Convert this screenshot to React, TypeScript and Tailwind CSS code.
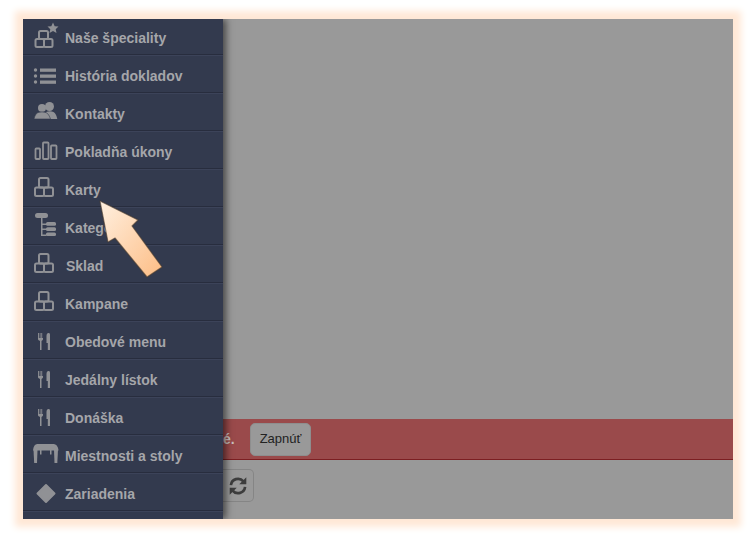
import React from "react";

const C = "#909195";

function Boxes() {
  return (
    <svg width="36" height="28" viewBox="0 0 36 28" fill="none" stroke={C} strokeWidth="2">
      <rect x="7" y="4" width="9.500" height="9.500" rx="1.500" />
      <rect x="3" y="13.500" width="9" height="8.500" rx="1.500" />
      <rect x="12" y="13.500" width="9" height="8.500" rx="1.500" />
    </svg>
  );
}

function BoxesStar() {
  return (
    <svg width="36" height="28" viewBox="0 0 36 28" fill="none" stroke={C} strokeWidth="2">
      <rect x="7" y="9" width="9" height="8" rx="1.500" />
      <rect x="3.500" y="17" width="8.500" height="8" rx="1.500" />
      <rect x="12" y="17" width="8.500" height="8" rx="1.500" />
      <polygon points="21,0.500 22.700,4.300 26.500,4.600 23.700,7.300 24.500,11 21,9.100 17.500,11 18.300,7.300 15.500,4.600 19.300,4.300" fill={C} stroke="none" />
    </svg>
  );
}

function ListIcon() {
  return (
    <svg width="36" height="28" viewBox="0 0 36 28" fill={C}>
      <circle cx="3.500" cy="10" r="1.700" /><circle cx="3.500" cy="16" r="1.700" /><circle cx="3.500" cy="22" r="1.700" />
      <rect x="8" y="8.500" width="16" height="3.300" />
      <rect x="8" y="14.500" width="16" height="3.300" />
      <rect x="8" y="20.500" width="16" height="3.300" />
    </svg>
  );
}

function People() {
  return (
    <svg width="36" height="28" viewBox="0 0 36 28" fill={C}>
      <circle cx="17.500" cy="8.500" r="4.500" />
      <path d="M14 14c2.500-1 5.500-1 7.500 0c1.800 1 3 3.500 3.800 7H14z" />
      <circle cx="10" cy="10" r="4" />
      <path d="M6 14.500c2-.8 6-.8 8 0c2.200 1 3.500 3.500 4.500 6.500H2c.7-3 1.800-5.500 4-6.500z" stroke="#333a4e" strokeWidth="0.600" />
    </svg>
  );
}

function Bars() {
  return (
    <svg width="36" height="28" viewBox="0 0 36 28" fill="none" stroke={C} strokeWidth="1.800">
      <rect x="3.500" y="12.500" width="4.500" height="10.500" rx="0.800" />
      <rect x="11" y="6.500" width="5.500" height="16.500" rx="0.800" />
      <rect x="19" y="9.500" width="5.500" height="13.500" rx="0.800" />
    </svg>
  );
}

function Tree() {
  return (
    <svg width="36" height="28" viewBox="0 0 36 28" fill={C}>
      <rect x="3" y="1" width="13" height="5" rx="2.500" />
      <path d="M9 6h1.500v16.500h4V24H9z" />
      <path d="M10 11.500h5V13h-5zM10 16.500h5V18h-5z" />
      <rect x="14" y="10" width="10" height="3.700" rx="1.500" />
      <rect x="14" y="15.200" width="10" height="3.700" rx="1.500" />
      <rect x="14" y="20.400" width="10" height="3.700" rx="1.500" />
    </svg>
  );
}

function Cutlery() {
  return (
    <svg width="36" height="28" viewBox="0 0 36 28" fill={C}>
      <path d="M6 7h.900v5h.800V7h.800v5h.800V7h.800v5h.800V7h.100v6c0 1-.800 1.500-1.500 2v9H8v-9c-1-.500-2-1-2-2z" />
      <path d="M16.500 7c1 0 1.500.500 1.500 2v15h-2.200v-7H14.500V10c0-2 .800-3 2-3z" />
    </svg>
  );
}

function TableIcon() {
  return (
    <svg width="36" height="28" viewBox="0 0 36 28" fill={C}>
      <path d="M6 4h15c3 0 5 2 5.500 6.500H1C1.500 6 3 4 6 4z" />
      <path d="M1.500 10H5.500L5 23H2.200z" />
      <path d="M22 10H26L25.300 23H22.500z" />
      <rect x="8" y="10" width="1.500" height="4.500" />
      <rect x="18" y="10" width="1.500" height="4.500" />
    </svg>
  );
}

function Diamond() {
  return (
    <svg width="36" height="28" viewBox="0 0 36 28" fill={C}>
      <path d="M14 7l8.500 8.500L14 24l-8.500-8.500z" strokeLinejoin="round" stroke={C} strokeWidth="2" />
    </svg>
  );
}

const rows: { label: string; icon: React.ReactNode; pl?: string }[] = [
  { label: "Naše špeciality", icon: <BoxesStar /> },
  { label: "História dokladov", icon: <ListIcon /> },
  { label: "Kontakty", icon: <People /> },
  { label: "Pokladňa úkony", icon: <Bars /> },
  { label: "Karty", icon: <Boxes /> },
  { label: "Kategórie", icon: <Tree /> },
  { label: "Sklad", icon: <Boxes />, pl: "pl-px" },
  { label: "Kampane", icon: <Boxes /> },
  { label: "Obedové menu", icon: <Cutlery /> },
  { label: "Jedálny lístok", icon: <Cutlery /> },
  { label: "Donáška", icon: <Cutlery /> },
  { label: "Miestnosti a stoly", icon: <TableIcon /> },
  { label: "Zariadenia", icon: <Diamond /> },
];

export default function App() {
  return (
    <div
      className="w-[754px] h-[539px] overflow-hidden bg-white pt-[19px] pl-[23px]"
      style={{ fontFamily: '"Liberation Sans", Arial, sans-serif' }}
    >
      <div className="relative w-[710px] h-[500px] flex overflow-hidden bg-[#999999] shadow-[0_0_7px_8px_#ffe8d6]">
        <div className="relative z-10 w-[200px] h-[500px] overflow-hidden shrink-0 bg-[#333a4e] shadow-[3px_0_7px_rgba(0,0,0,0.55)]">
          <div className="flex flex-col -mt-[2px]">
            {rows.map((r) => (
              <div
                key={r.label}
                className="h-[38px] shrink-0 flex items-start pl-[9px] border-b border-b-[#282d3e] border-t border-t-[#3c4359]"
              >
                <div className="w-[33px] shrink-0 mt-[4px]">{r.icon}</div>
                <span className={`mt-[12px] leading-[16px] text-[14px] font-bold text-[#a5a6aa] whitespace-nowrap ${r.pl ?? ""}`}>{r.label}</span>
              </div>
            ))}
            <div className="h-[38px] border-t border-t-[#3c4359]" />
          </div>
        </div>

        <div className="flex-1 flex flex-col min-w-0">
          <div className="h-[400px] shrink-0" />
          <div className="h-[41px] shrink-0 bg-[#9a4a4b] border-b border-b-[#7c1f22] flex items-center">
            <span className="w-[27px] shrink-0 text-[14px] text-[#c9c0c0] font-bold">é.</span>
            <button className="h-[33px] w-[61px] rounded-[5px] bg-[#999999] border border-[#8e8e8e] text-[#222] text-[13px] flex items-center justify-center">
              Zapnúť
            </button>
          </div>
          <div className="pt-[9px]">
            <div className="w-[31px] h-[33px] rounded-r-[5px] border border-l-0 border-[#858585] flex items-center justify-center">
              <svg width="20" height="20" viewBox="0 0 24 24" fill="none" stroke="#3d3d3d" strokeWidth="3.200">
                <path d="M3.500 11a8.500 8.500 0 0 1 15-4.500" />
                <path d="M22 1.500v8.500h-8.500z" fill="#3d3d3d" stroke="none" />
                <path d="M20.500 13a8.500 8.500 0 0 1-15 4.500" />
                <path d="M2 22.500V14h8.500z" fill="#3d3d3d" stroke="none" />
              </svg>
            </div>
          </div>
        </div>

        <svg className="absolute z-20 left-[75px] top-[180px]" width="72" height="85" viewBox="0 0 72 85">
          <defs>
            <linearGradient id="ar" x1="0" y1="0" x2="1" y2="1">
              <stop offset="0" stopColor="#fff0e0" />
              <stop offset="1" stopColor="#fdbd85" />
            </linearGradient>
          </defs>
          <path d="M2 2L40 21L34 27L64 68L49 78L17 39L10 43Z" fill="url(#ar)" stroke="#4a3a2c" strokeOpacity="0.6" strokeWidth="1.200" strokeLinejoin="round" />
        </svg>
      </div>
    </div>
  );
}
